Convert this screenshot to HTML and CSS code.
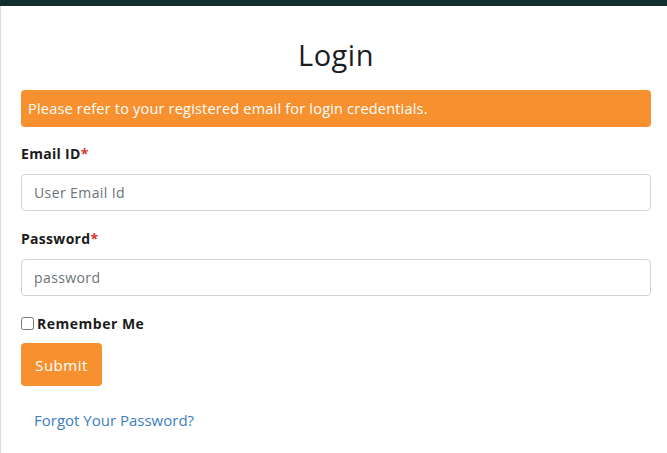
FILE: index.html
```html
<!DOCTYPE html>
<html>
<head>
<meta charset="utf-8">
<link rel="stylesheet" href="styles.css">
</head>
<body>
<div class="topbar"></div>
<main class="card">
  <h1 class="title">Login</h1>
  <div class="alert">Please refer to your registered email for login credentials.</div>
  <form class="form">
    <label class="label label-first" for="email">Email ID<span class="req">*</span></label>
    <input class="input" id="email" type="text" placeholder="User Email Id">
    <label class="label" for="pw">Password<span class="req">*</span></label>
    <input class="input" id="pw" type="password" placeholder="password">
    <label class="remember"><input type="checkbox" class="check"> Remember Me</label>
    <div><button type="button" class="btn">Submit</button></div>
    <div class="forgot-row"><a class="forgot" href="#">Forgot Your Password?</a></div>
  </form>
</main>
</body>
</html>
```
FILE: styles.css
```css
html, body { margin: 0; padding: 0; background: #fff; }
body { font-family: "Open Sans", "Noto Sans", sans-serif; color: #212529; }
.topbar { height: 6px; background: #112f2c; }
.card {
  border-left: 1px solid #dcdcdc;
  padding: 0 16px 0 20px;
  min-height: 447px;
  box-sizing: border-box;
}
.title {
  margin: 0;
  padding-top: 30px;
  text-align: center;
  font-size: 29px;
  font-weight: 500;
  letter-spacing: 0.5px;
  line-height: 38px;
  color: #1d1d1f;
}
.alert {
  margin-top: 16px;
  background: #f7912f;
  color: #fff;
  border-radius: 4px;
  height: 37px;
  box-sizing: border-box;
  padding: 0 7px;
  display: flex;
  align-items: center;
  font-size: 14.5px;
  letter-spacing: 0.2px;
}
.form { display: flex; flex-direction: column; }
.label {
  margin-top: 18px;
  font-weight: 700;
  font-size: 14px;
  letter-spacing: 0.3px;
  line-height: 20px;
  color: #1b1b1b;
}
.label-first { margin-top: 17px; }
.req { color: #d9342b; }
.input {
  margin-top: 10px;
  height: 37px;
  box-sizing: border-box;
  border: 1px solid #cfd4da;
  border-radius: 4px;
  padding: 0 12px;
  font-family: inherit;
  font-size: 14px;
  letter-spacing: 0.4px;
  color: #495057;
}
.input::placeholder { color: #6c737a; }
.remember {
  margin-top: 17px;
  height: 20px;
  display: flex;
  align-items: center;
  gap: 3px;
  font-weight: 700;
  font-size: 14px;
  letter-spacing: 0.5px;
  color: #1b1b1b;
}
.check { margin: 0; width: 13px; height: 13px; }
.btn {
  margin-top: 10px;
  width: 81px;
  height: 43px;
  background: #f7912f;
  color: #fff;
  border: none;
  border-radius: 4px;
  font-family: inherit;
  font-size: 15px;
  letter-spacing: 0.5px;
}
.forgot-row { margin-top: 24px; padding-left: 13px; line-height: 20px; }
.forgot {
  color: #3d7ebf;
  text-decoration: none;
  font-size: 15px;
}
```
